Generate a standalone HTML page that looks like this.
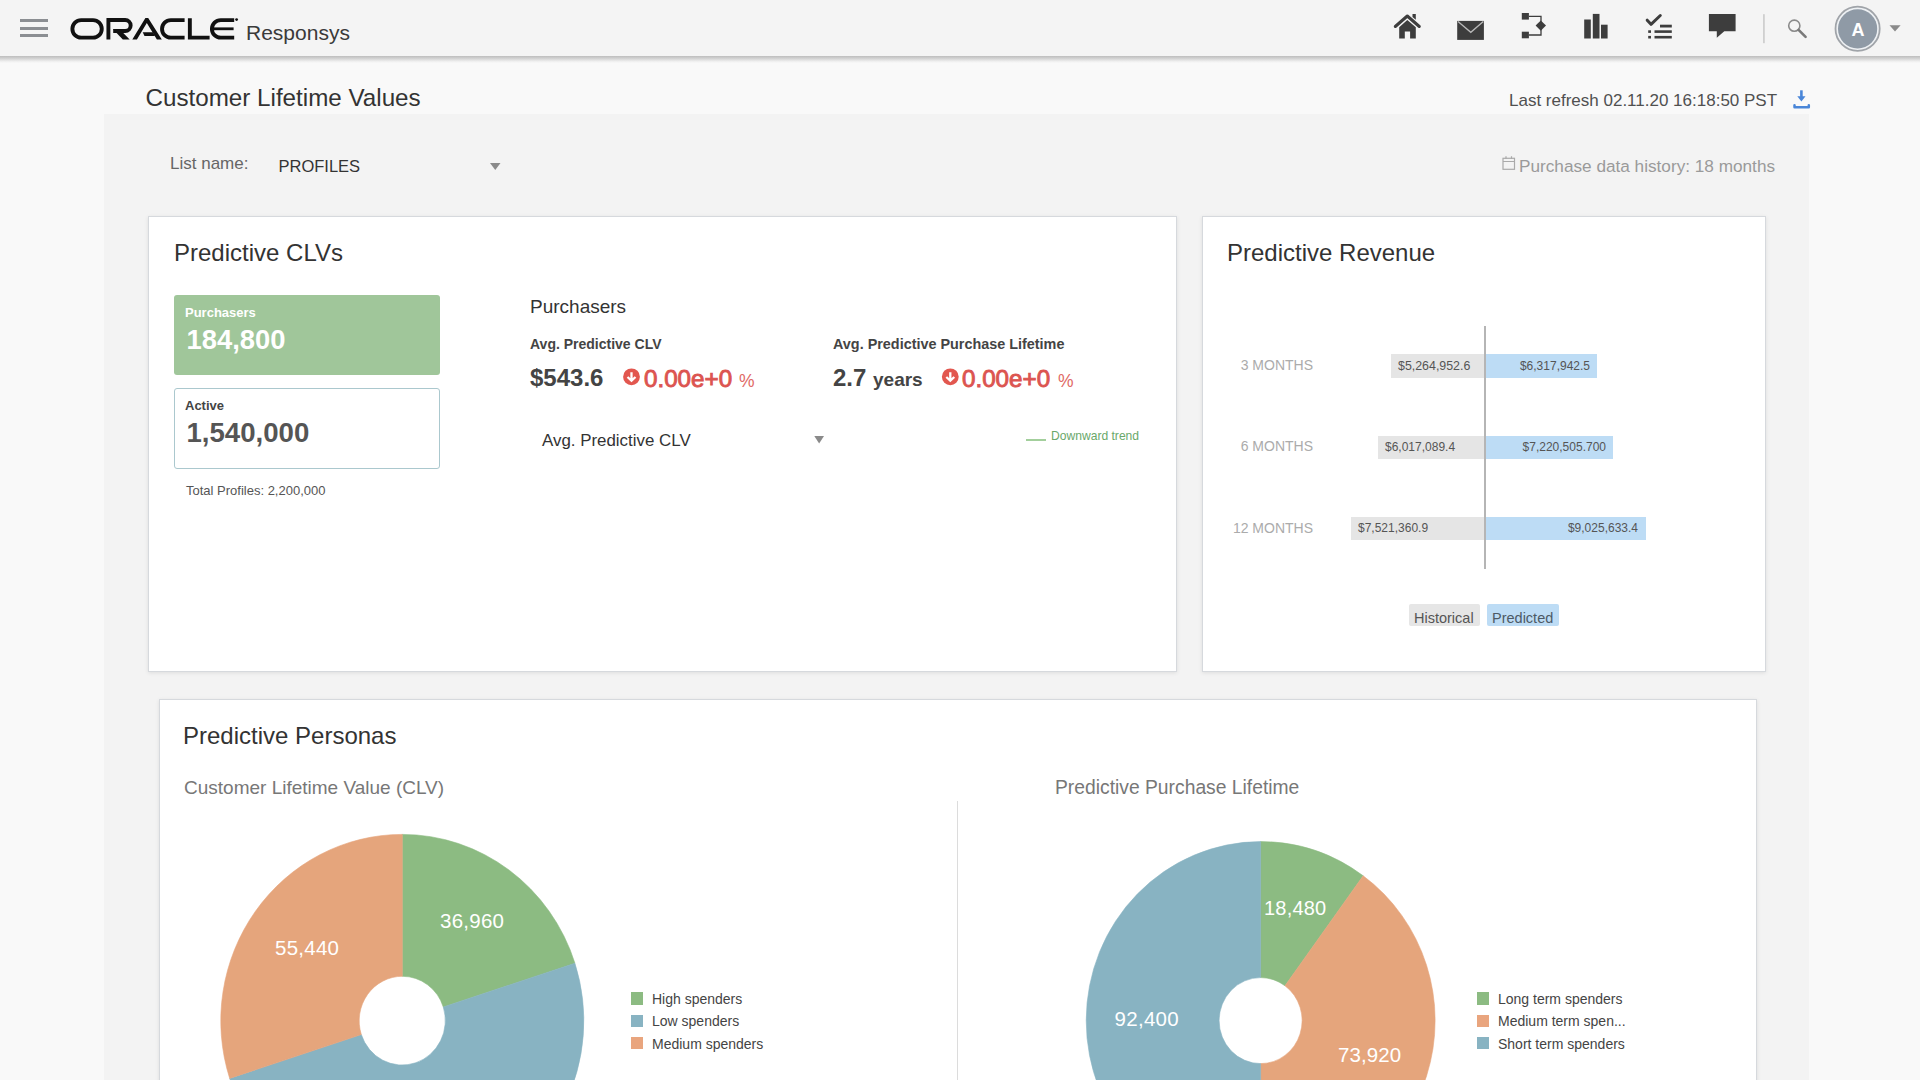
<!DOCTYPE html>
<html><head><meta charset="utf-8">
<style>
*{margin:0;padding:0;box-sizing:border-box}
html,body{width:1920px;height:1080px;overflow:hidden;background:#f9f9f9;font-family:"Liberation Sans",sans-serif;color:#333}
.a{position:absolute;white-space:nowrap}
.hdr{position:absolute;left:0;top:0;width:1920px;height:56px;background:#f4f4f4}
.shadow{position:absolute;left:0;top:56px;width:1920px;height:7px;background:linear-gradient(#bdbdbd,#d2d2d2 35%,#eeeeee 75%,#f9f9f9)}
.panel{position:absolute;left:104px;top:114px;width:1705px;height:966px;background:#f3f3f3}
.card{position:absolute;background:#fff;border:1px solid #d6d9dd;box-shadow:0 1px 4px rgba(0,0,0,0.09)}
</style></head><body>

<div class="hdr"></div>
<div class="shadow"></div>

<!-- hamburger -->
<div class="a" style="left:20px;top:19px;width:28px;height:3px;background:#8b8e92"></div>
<div class="a" style="left:20px;top:27px;width:28px;height:3px;background:#8b8e92"></div>
<div class="a" style="left:20px;top:34px;width:28px;height:3px;background:#8b8e92"></div>

<!-- ORACLE logo -->
<svg class="a" style="left:0;top:0" width="260" height="56" viewBox="0 0 260 56">
 <g fill="none" stroke="#111" stroke-width="3.9">
  <rect x="72.4" y="20.15" width="29.35" height="17.45" rx="8.72"/>
  <path d="M108.4 18.2V39.55M106.5 20.05H125.2A5.45 5.45 0 0 1 125.2 30.95H113.2"/>
  <path d="M184.6 20.1H170.8A8.75 8.75 0 0 0 170.8 37.65H184.6"/>
  <path d="M189.85 18.2V37.65H209.6" stroke-linejoin="miter"/>
  <path d="M234.2 20.1H220.7A8.75 8.75 0 0 0 220.7 37.65H234.2"/>
  <path d="M213.3 28.8H233.6" stroke-width="2.8"/>
 </g>
 <g fill="#111">
  <polygon points="113,29.2 119.6,29.2 129.7,39.6 122.8,39.6"/>
  <polygon points="132.3,39.6 145.4,18.1 148.2,18.1 161.8,39.6 156.9,39.6 146.8,23.1 136.9,39.6"/>
  <polygon points="142.7,32.3 152.9,32.3 155,35.9 144.5,35.9"/>
  <circle cx="236.6" cy="19.6" r="1.4"/>
 </g>
</svg>
<div class="a" style="left:246px;top:22px;font-size:21px;line-height:21px;color:#3a3a3a">Responsys</div>

<!-- header icons -->
<svg class="a" style="left:1380px;top:0" width="540" height="56" viewBox="1380 0 540 56">
 <g fill="#3d3d3d">
  <!-- home -->
  <polygon points="1412.5,14 1415.8,14 1415.8,19.8 1412.5,17"/>
  <polygon points="1399.2,38.6 1399.2,27.3 1407.3,20.1 1415.8,27.3 1415.8,38.6 1410.1,38.6 1410.1,31.6 1404.8,31.6 1404.8,38.6"/>
  <!-- mail -->
  <rect x="1457.2" y="20.9" width="26.7" height="19"/>
  <!-- flow -->
  <rect x="1521.8" y="13" width="7.1" height="6.6"/>
  <rect x="1521.8" y="31.7" width="7.1" height="6.6"/>
  <polygon points="1540.8,20.4 1546,25.6 1540.8,30.8 1535.6,25.6"/>
  <!-- bars -->
  <rect x="1584.2" y="19.5" width="6.6" height="19"/>
  <rect x="1592.8" y="13.9" width="6.7" height="24.6"/>
  <rect x="1601" y="24.7" width="6.6" height="13.8"/>
  <!-- checklist -->
  <rect x="1660" y="24.7" width="11.8" height="2.8"/>
  <rect x="1648.2" y="30.3" width="2.8" height="2.6"/>
  <rect x="1654.5" y="30.3" width="17.3" height="2.6"/>
  <rect x="1648.2" y="35.9" width="2.8" height="2.6"/>
  <rect x="1654.5" y="35.9" width="17.3" height="2.6"/>
  <!-- chat -->
  <path d="M1708.9 13.9H1735.6V31.2H1724.3L1716.8 37.8V31.2H1708.9Z"/>
 </g>
 <path d="M1395.3 26.5L1407.3 16L1419.3 26.5" fill="none" stroke="#3d3d3d" stroke-width="3" stroke-linecap="round" stroke-linejoin="round"/>
 <path d="M1458 21.5L1470.8 32.3L1483.3 21.5" fill="none" stroke="#b9b9b9" stroke-width="1.3"/>
 <path d="M1528.9 16.3H1541V35H1528.9" fill="none" stroke="#3d3d3d" stroke-width="1.3"/>
 <path d="M1647.2 20.2L1651 24.3L1660.3 15.5" fill="none" stroke="#3d3d3d" stroke-width="3" stroke-linecap="round" stroke-linejoin="round"/>
 <!-- separator -->
 <rect x="1763" y="14.2" width="1.8" height="29" fill="#cfcfcf"/>
 <!-- search -->
 <circle cx="1794.3" cy="25.7" r="5.6" fill="none" stroke="#8a8a8a" stroke-width="1.6"/>
 <path d="M1798.6 29.8L1805.6 36.8" stroke="#7a7a7a" stroke-width="2.6" stroke-linecap="round"/>
 <!-- avatar -->
 <circle cx="1857.6" cy="28.8" r="22.1" fill="#eef1f4" stroke="#a0a4a9" stroke-width="1.8"/>
 <circle cx="1857.6" cy="28.8" r="19.6" fill="#8f9aa6"/>
 <polygon points="1889.5,25.2 1900.6,25.2 1895,31.4" fill="#8a8a8a"/>
</svg>
<div class="a" style="left:1851.5px;top:21px;font-size:18px;line-height:18px;font-weight:700;color:#fff">A</div>

<!-- title row -->
<div class="a" style="left:145.5px;top:86px;font-size:24.2px;line-height:24px;color:#333">Customer Lifetime Values</div>
<div class="a" style="left:1509px;top:92px;font-size:17px;line-height:17px;color:#505050">Last refresh 02.11.20 16:18:50 PST</div>
<svg class="a" style="left:1785px;top:84px" width="35" height="30" viewBox="1785 84 35 30">
 <path d="M1801.4 90.3V97" stroke="#4a86d8" stroke-width="2.6"/>
 <polygon points="1797.3,96.3 1805.5,96.3 1801.4,101.6" fill="#4a86d8"/>
 <path d="M1794.5 105.2V107.3H1808.8V105.2" fill="none" stroke="#4a86d8" stroke-width="2.5" stroke-linecap="round" stroke-linejoin="round"/>
</svg>

<div class="panel"></div>

<!-- filter row -->
<div class="a" style="left:170px;top:155px;font-size:17px;line-height:17px;color:#666">List name:</div>
<div class="a" style="left:278.5px;top:158px;font-size:16.5px;line-height:17px;color:#333">PROFILES</div>
<svg class="a" style="left:488px;top:160px" width="16" height="14"><polygon points="2,3 12.5,3 7.25,10" fill="#8a8a8a"/></svg>
<svg class="a" style="left:1500px;top:154px" width="18" height="18" viewBox="0 0 18 18">
 <rect x="3" y="4.3" width="11.5" height="11" fill="none" stroke="#aaa" stroke-width="1.2"/>
 <path d="M3 7.5H14.5M6 2.3V5M11.5 2.3V5" stroke="#aaa" stroke-width="1.2"/>
</svg>
<div class="a" style="left:1519px;top:158px;font-size:17.2px;line-height:17px;color:#9a9a9a">Purchase data history: 18 months</div>

<!-- Card 1 -->
<div class="card" style="left:148px;top:216px;width:1029px;height:456px"></div>
<div class="a" style="left:174px;top:241px;font-size:24px;line-height:24px;color:#333">Predictive CLVs</div>
<div class="a" style="left:174px;top:295px;width:266px;height:80px;background:#a0c69a;border-radius:3px"></div>
<div class="a" style="left:185px;top:306px;font-size:13px;line-height:13px;font-weight:700;color:#fff">Purchasers</div>
<div class="a" style="left:186.5px;top:326px;font-size:27.4px;line-height:27px;font-weight:700;color:#fff">184,800</div>
<div class="a" style="left:174px;top:388px;width:266px;height:81px;border:1px solid #abc8ce;border-radius:3px;background:#fff"></div>
<div class="a" style="left:185px;top:399px;font-size:13px;line-height:13px;font-weight:700;color:#444">Active</div>
<div class="a" style="left:186.5px;top:419px;font-size:27.6px;line-height:27px;font-weight:700;color:#555">1,540,000</div>
<div class="a" style="left:186px;top:484px;font-size:13px;line-height:13px;color:#555">Total Profiles: 2,200,000</div>

<div class="a" style="left:530px;top:297px;font-size:19px;line-height:19px;color:#333">Purchasers</div>
<div class="a" style="left:530px;top:337px;font-size:14px;line-height:14px;font-weight:700;color:#444">Avg. Predictive CLV</div>
<div class="a" style="left:530px;top:366px;font-size:24px;line-height:24px;font-weight:700;color:#444">$543.6</div>
<svg class="a" style="left:622px;top:367px" width="20" height="20" viewBox="0 0 20 20">
 <circle cx="9.5" cy="9.8" r="8.4" fill="#e2574f"/>
 <path d="M9.5 5.2V12.8M5.5 10L9.5 13.6L13.5 10" fill="none" stroke="#fff" stroke-width="2.3" stroke-linejoin="miter"/>
</svg>
<div class="a" style="left:644px;top:367px;font-size:24.2px;line-height:24px;color:#dc5450;-webkit-text-stroke:0.9px #dc5450">0.00e+0</div>
<div class="a" style="left:739px;top:373px;font-size:17.5px;line-height:17px;color:#df6a66">%</div>

<div class="a" style="left:833px;top:337px;font-size:14.4px;line-height:14px;font-weight:700;color:#444">Avg. Predictive Purchase Lifetime</div>
<div class="a" style="left:833px;top:366px;font-size:24px;line-height:24px;font-weight:700;color:#444">2.7</div>
<div class="a" style="left:873px;top:370px;font-size:19px;line-height:19px;font-weight:700;color:#444">years</div>
<svg class="a" style="left:941px;top:367px" width="20" height="20" viewBox="0 0 20 20">
 <circle cx="9.3" cy="9.8" r="8.4" fill="#e2574f"/>
 <path d="M9.3 5.2V12.8M5.3 10L9.3 13.6L13.3 10" fill="none" stroke="#fff" stroke-width="2.3"/>
</svg>
<div class="a" style="left:962px;top:367px;font-size:24.2px;line-height:24px;color:#dc5450;-webkit-text-stroke:0.9px #dc5450">0.00e+0</div>
<div class="a" style="left:1058px;top:373px;font-size:17.5px;line-height:17px;color:#df6a66">%</div>

<div class="a" style="left:542px;top:432px;font-size:16.9px;line-height:17px;color:#333">Avg. Predictive CLV</div>
<svg class="a" style="left:812px;top:434px" width="14" height="12"><polygon points="2.3,2 12,2 7.15,9.4" fill="#8a8a8a"/></svg>
<div class="a" style="left:1026px;top:439px;width:20px;height:2px;background:#a3cf9c"></div>
<div class="a" style="left:1051px;top:430px;font-size:12.1px;line-height:12px;color:#6aa86a">Downward trend</div>

<!-- Card 2 -->
<div class="card" style="left:1202px;top:216px;width:564px;height:456px"></div>
<div class="a" style="left:1227px;top:241px;font-size:24px;line-height:24px;color:#333">Predictive Revenue</div>

<!-- bar chart -->
<div class="a" style="left:1484px;top:326px;width:2px;height:243px;background:#b5b5b5"></div>
<div class="a" style="left:1391px;top:354px;width:93px;height:24px;background:#e5e5e5"></div>
<div class="a" style="left:1486px;top:354px;width:111px;height:24px;background:#bddcf5"></div>
<div class="a" style="left:1378px;top:436px;width:106px;height:23px;background:#e5e5e5"></div>
<div class="a" style="left:1486px;top:436px;width:127px;height:23px;background:#bddcf5"></div>
<div class="a" style="left:1351px;top:517px;width:133px;height:23px;background:#e5e5e5"></div>
<div class="a" style="left:1486px;top:517px;width:160px;height:23px;background:#bddcf5"></div>
<div class="a" style="left:1238px;top:358px;width:75px;text-align:right;font-size:14px;line-height:14px;color:#ababab">3 MONTHS</div>
<div class="a" style="left:1238px;top:439px;width:75px;text-align:right;font-size:14px;line-height:14px;color:#ababab">6 MONTHS</div>
<div class="a" style="left:1213px;top:521px;width:100px;text-align:right;font-size:14px;line-height:14px;color:#ababab">12 MONTHS</div>
<div class="a" style="left:1398px;top:360px;font-size:12.4px;line-height:12px;color:#555">$5,264,952.6</div>
<div class="a" style="left:1490px;top:360px;width:100px;text-align:right;font-size:12px;line-height:12px;color:#555">$6,317,942.5</div>
<div class="a" style="left:1385px;top:441px;font-size:12px;line-height:12px;color:#555">$6,017,089.4</div>
<div class="a" style="left:1490px;top:441px;width:116px;text-align:right;font-size:12px;line-height:12px;color:#555">$7,220,505.700</div>
<div class="a" style="left:1358px;top:522px;font-size:12px;line-height:12px;color:#555">$7,521,360.9</div>
<div class="a" style="left:1490px;top:522px;width:148px;text-align:right;font-size:12px;line-height:12px;color:#555">$9,025,633.4</div>
<div class="a" style="left:1409px;top:604px;width:71px;height:22px;background:#e6e6e6;border-radius:2px"></div>
<div class="a" style="left:1487px;top:604px;width:72px;height:22px;background:#bddcf5;border-radius:2px"></div>
<div class="a" style="left:1414px;top:611px;font-size:14.5px;line-height:15px;color:#555">Historical</div>
<div class="a" style="left:1492px;top:611px;font-size:14.5px;line-height:15px;color:#4d5a66">Predicted</div>

<!-- Card 3 -->
<div class="card" style="left:159px;top:699px;width:1598px;height:420px"></div>
<div class="a" style="left:183px;top:724px;font-size:24px;line-height:24px;color:#333">Predictive Personas</div>
<div class="a" style="left:184px;top:778px;font-size:19px;line-height:19px;color:#777">Customer Lifetime Value (CLV)</div>
<div class="a" style="left:1055px;top:778px;font-size:19.3px;line-height:19px;color:#777">Predictive Purchase Lifetime</div>
<div class="a" style="left:957px;top:801px;width:1px;height:279px;background:#dcdcdc"></div>
<svg class="a" style="left:0;top:0" width="1920" height="1080" viewBox="0 0 1920 1080">
<path d="M402.30 834.40A181.5 186.4 0 0 1 574.92 963.20L443.29 1007.05A43.1 44.5 0 0 0 402.30 976.30Z" fill="#8cbb82" stroke="#8cbb82" stroke-width="0.6"/>
<path d="M574.92 963.20A181.5 186.4 0 0 1 229.68 1078.40L361.31 1034.55A43.1 44.5 0 0 0 443.29 1007.05Z" fill="#88b3c2" stroke="#88b3c2" stroke-width="0.6"/>
<path d="M229.68 1078.40A181.5 186.4 0 0 1 402.30 834.40L402.30 976.30A43.1 44.5 0 0 0 361.31 1034.55Z" fill="#e5a57c" stroke="#e5a57c" stroke-width="0.6"/>
<path d="M1260.60 841.60A174.5 179 0 0 1 1363.17 875.79L1284.99 985.81A41.5 43 0 0 0 1260.60 977.60Z" fill="#8cbb82" stroke="#8cbb82" stroke-width="0.6"/>
<path d="M1363.17 875.79A174.5 179 0 0 1 1260.60 1199.60L1260.60 1063.60A41.5 43 0 0 0 1284.99 985.81Z" fill="#e5a57c" stroke="#e5a57c" stroke-width="0.6"/>
<path d="M1260.60 1199.60A174.5 179 0 0 1 1260.60 841.60L1260.60 977.60A41.5 43 0 0 0 1260.60 1063.60Z" fill="#88b3c2" stroke="#88b3c2" stroke-width="0.6"/>
</svg>
<div class="a" style="left:440px;top:911px;font-size:20.5px;line-height:20px;letter-spacing:0.25px;color:#fff">36,960</div>
<div class="a" style="left:275px;top:938px;font-size:20.5px;line-height:20px;letter-spacing:0.25px;color:#fff">55,440</div>
<div class="a" style="left:1264px;top:898px;font-size:20px;line-height:20px;letter-spacing:0.2px;color:#fff">18,480</div>
<div class="a" style="left:1114.5px;top:1009px;font-size:20.5px;line-height:20px;letter-spacing:0.3px;color:#fff">92,400</div>
<div class="a" style="left:1338px;top:1045px;font-size:20.5px;line-height:20px;letter-spacing:0.1px;color:#fff">73,920</div>

<div class="a" style="left:631px;top:992px;width:12px;height:12.5px;background:#8cbb82"></div>
<div class="a" style="left:631px;top:1015px;width:12px;height:12px;background:#88b3c2"></div>
<div class="a" style="left:631px;top:1037px;width:12px;height:12px;background:#e9a57e"></div>
<div class="a" style="left:652px;top:992px;font-size:14px;line-height:14px;color:#444">High spenders</div>
<div class="a" style="left:652px;top:1014px;font-size:14px;line-height:14px;color:#444">Low spenders</div>
<div class="a" style="left:652px;top:1037px;font-size:14px;line-height:14px;color:#444">Medium spenders</div>
<div class="a" style="left:1477px;top:992px;width:12px;height:12.5px;background:#8cbb82"></div>
<div class="a" style="left:1477px;top:1015px;width:12px;height:12px;background:#e9a57e"></div>
<div class="a" style="left:1477px;top:1037px;width:12px;height:12px;background:#88b3c2"></div>
<div class="a" style="left:1498px;top:992px;font-size:14px;line-height:14px;color:#444">Long term spenders</div>
<div class="a" style="left:1498px;top:1014px;font-size:14px;line-height:14px;color:#444">Medium term spen...</div>
<div class="a" style="left:1498px;top:1037px;font-size:14px;line-height:14px;color:#444">Short term spenders</div>
</body></html>
